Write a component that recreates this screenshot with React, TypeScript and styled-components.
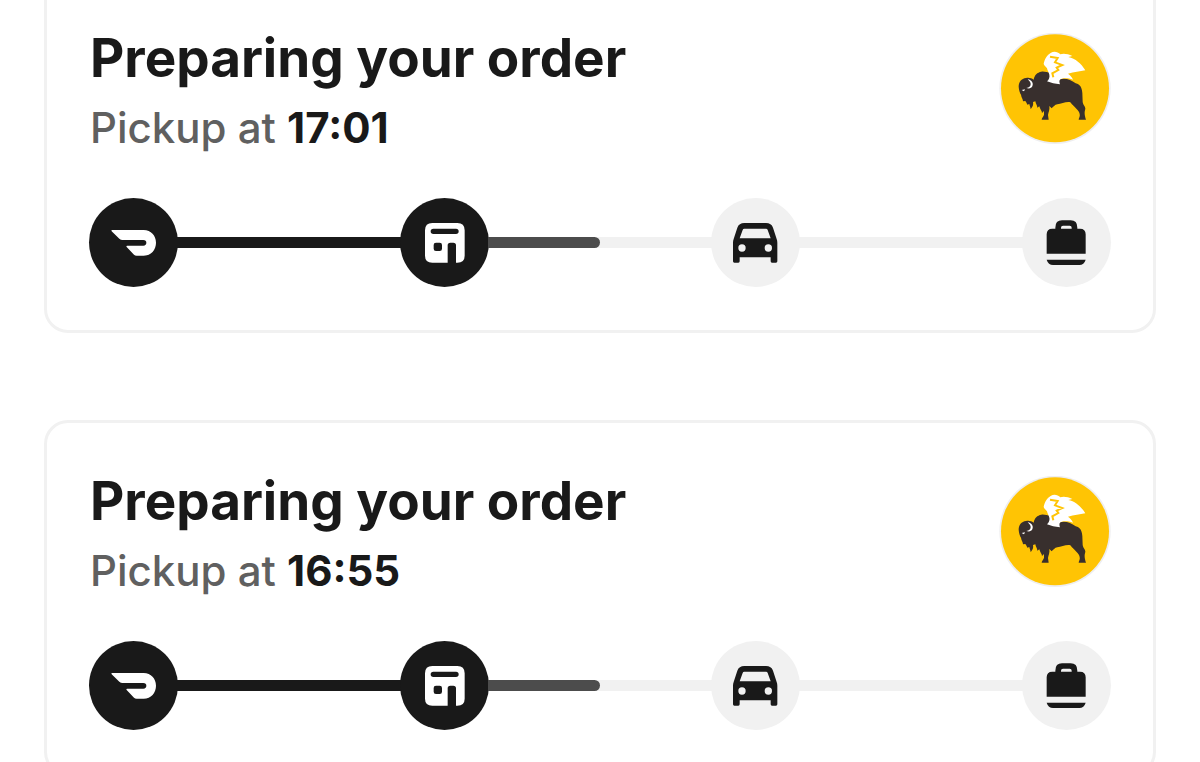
import React from 'react';
import styled, { createGlobalStyle } from 'styled-components';

const ink = '#191919';
const muted = '#606060';
const line = '#f1f1f1';

const GlobalStyle = createGlobalStyle`
  * { box-sizing: border-box; }
  body {
    margin: 0;
    background: #fff;
    color: ${ink};
    font-family: Inter, 'Liberation Sans', sans-serif;
  }
`;

const Viewport = styled.main`
  height: 100vh;
  overflow: hidden;
  padding: 0 44px;
`;

/* The list is scrolled a little, so the first card starts above the window. */
const OrderList = styled.div`
  display: flex;
  flex-direction: column;
  gap: 87px;
  margin-top: -23px;
`;

const Card = styled.article`
  padding: 44px 42px 43px;
  border: 3px solid ${line};
  border-radius: 24px;
`;

const CardHeader = styled.header`
  display: flex;
  align-items: center;
  justify-content: space-between;
  margin-bottom: 44px;
`;

const Heading = styled.div`
  display: flex;
  flex-direction: column;
  gap: 10px;
  padding-left: 1px;
`;

const Title = styled.h2`
  margin: 0;
  font-size: 53px;
  font-weight: 700;
  line-height: 68px;
`;

const Pickup = styled.p`
  margin: 0;
  color: ${muted};
  font-size: 42px;
  font-weight: 500;
  line-height: 52px;
`;

const Time = styled.time`
  color: ${ink};
  font-weight: 700;
`;

const Logo = styled.svg`
  flex: none;
  width: 112px;
  height: 112px;
`;

const Track = styled.div`
  display: flex;
  align-items: center;
`;

const Step = styled.div<{ $done?: boolean }>`
  flex: none;
  width: 89px;
  height: 89px;
  border-radius: 50%;
  background: ${p => (p.$done ? ink : line)};
  color: ${p => (p.$done ? '#fff' : ink)};

  svg {
    display: block;
    width: 100%;
    height: 100%;
  }
`;

/* Each segment tucks under the circles at both of its ends. */
const Segment = styled.div`
  flex: 1;
  height: 11px;
  margin: 0 -1px;
  background: ${line};
`;

const Fill = styled.div<{ $active: boolean }>`
  height: 100%;
  background: ${p => (p.$active ? '#4c4c4c' : ink)};
  border-radius: ${p => (p.$active ? '0 6px 6px 0' : '0')};
`;

const DashIcon = () => (
  <svg viewBox="15 18 267 267" fill="currentColor" aria-hidden="true">
    <path d="M85 114H179C201 114 216 131 216 152S201 191 179 191H158Q153 191 150 188L128 165Q125 161 130 161H178Q187 161 187 152.500T178 144H116Q110 144 106 140L83 118Q80 114 85 114Z" />
  </svg>
);

const StoreIcon = () => (
  <svg viewBox="15 18 267 267" fill="currentColor" aria-hidden="true">
    <path
      fillRule="evenodd"
      d="M112 93H187Q209 93 209 115V191Q209 212 187 212H183V160Q183 152 175 152H166Q158 152 158 160V212H112Q90 212 90 191V115Q90 93 112 93ZM115 110A8 8 0 0 0 115 126H183A8 8 0 0 0 183 110ZM123 152Q116 152 116 159V170Q116 177 123 177H134Q141 177 141 170V159Q141 152 134 152Z"
    />
  </svg>
);

const CarIcon = () => (
  <svg viewBox="18 18 267 267" fill="currentColor" aria-hidden="true">
    <path
      fillRule="evenodd"
      d="M118 93H183Q199 93 204 107L215 141Q217 146 217 152V208Q217 212 213 212H201Q197 212 197 208V196H104V208Q104 212 100 212H88Q84 212 84 208V152Q84 146 86 141L97 107Q102 93 118 93ZM118 110Q114 110 113 114L104 139H197L188 114Q187 110 183 110ZM111 157A11 11 0 1 0 111 179A11 11 0 1 0 111 157ZM190 157A11 11 0 1 0 190 179A11 11 0 1 0 190 157Z"
    />
  </svg>
);

const BagIcon = () => (
  <svg viewBox="18 18 267 267" fill="currentColor" aria-hidden="true">
    <path
      fillRule="evenodd"
      d="M118 110V107Q118 85 138 85H164Q184 85 184 107V110H192Q209 110 209 127V185H92V127Q92 110 109 110ZM135 110H167V107Q167 101 161 101H141Q135 101 135 107Z"
    />
    <path d="M92 203H209Q204 219 190 219H111Q97 219 92 203Z" />
  </svg>
);

const RestaurantLogo = () => (
  <Logo viewBox="27 27 336 336" role="img" aria-label="Restaurant">
    <circle cx="195" cy="193" r="167" fill="#eeeef0" />
    <circle cx="195" cy="193" r="162" fill="#ffc404" />
    <path
      fill="#382f2d"
      d="M86 188C86 174 94 164 108 162C117 160 124 162 131 167C133 153 142 145 154 143C164 142 172 145 182 148L210 166C226 161 243 168 257 178C271 181 276 192 277 207L278 233C279 243 287 248 286 255C283 264 283 272 288 287H266C266 282 271 278 269 270C267 259 254 251 241 235C229 232 214 240 202 241C194 242 190 249 185 253L178 246C180 257 175 266 174 273L176 287H155C155 281 161 278 162 272V261L156 267C156 260 150 257 148 247L142 251C142 244 137 239 136 232L129 234C131 245 126 250 122 256C122 250 119 247 118 240L112 242C110 236 108 235 106 231L99 232C99 225 94 221 93 212C89 206 87 198 86 188Z"
    />
    <path fill="#fff" d="M113 166C126 168 131 178 127 187C124 193 117 195 109 192C118 190 123 185 122 179C121 173 117 170 113 166Z" />
    <path fill="#fff" d="M95 198L105 196L102 202Z" />
    <path
      fill="#fff"
      d="M161 120C163 107 171 92 183 86C193 81 204 84 211 91C221 87 234 90 247 96L235 99C256 103 274 119 286 139C269 142 253 144 234 149C241 154 246 160 249 167C233 161 217 162 211 166C207 169 208 175 210 181C195 179 183 177 171 172C176 168 180 160 178 152C176 144 172 140 171 133C168 128 163 126 161 120Z"
    />
    <path fill="none" stroke="#ffc404" strokeWidth="6" d="M180 98L203 102L195 115L217 123L200 131L205 138L187 148L190 160" />
  </Logo>
);

const steps = [
  { name: 'Order placed', Icon: DashIcon, done: true, progress: 100 },
  { name: 'Preparing', Icon: StoreIcon, done: true, progress: 50 },
  { name: 'On the way', Icon: CarIcon, done: false, progress: 0 },
  { name: 'Delivered', Icon: BagIcon, done: false, progress: 0 },
];

const OrderCard = ({ time }: { time: string }) => (
  <Card>
    <CardHeader>
      <Heading>
        <Title>Preparing your order</Title>
        <Pickup>
          Pickup at <Time dateTime={time}>{time}</Time>
        </Pickup>
      </Heading>
      <RestaurantLogo />
    </CardHeader>
    <Track>
      {steps.map(({ name, Icon, done, progress }, i) => (
        <React.Fragment key={name}>
          <Step $done={done}>
            <Icon />
          </Step>
          {i < steps.length - 1 && (
            <Segment>
              <Fill $active={progress < 100} style={{ width: `${progress}%` }} />
            </Segment>
          )}
        </React.Fragment>
      ))}
    </Track>
  </Card>
);

export default function App() {
  return (
    <>
      <GlobalStyle />
      <Viewport>
        <OrderList>
          <OrderCard time="17:01" />
          <OrderCard time="16:55" />
        </OrderList>
      </Viewport>
    </>
  );
}
